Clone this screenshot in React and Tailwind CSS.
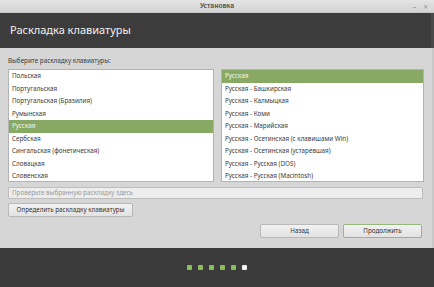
import React from "react";

const layouts = [
  "Польская",
  "Португальская",
  "Португальская (Бразилия)",
  "Румынская",
  "Русская",
  "Сербская",
  "Сингальская (фонетическая)",
  "Словацкая",
  "Словенская",
];

const variants = [
  "Русская",
  "Русская - Башкирская",
  "Русская - Калмыцкая",
  "Русская - Коми",
  "Русская - Марийская",
  "Русская - Осетинская (с клавишами Win)",
  "Русская - Осетинская (устаревшая)",
  "Русская - Русская (DOS)",
  "Русская - Русская (Macintosh)",
];

const ListBox = ({ items, selected, className }) => (
  <div
    className={`h-[113px] overflow-hidden bg-white border border-[#b3b3b3] ${className}`}
  >
    {items.map((item) => (
      <div
        key={item}
        className={
          item === selected
            ? "h-[12.5px] leading-[12.5px] px-[3px] bg-[#87a964] text-[#f4f8ef]"
            : "h-[12.5px] leading-[12.5px] px-[3px] text-[#3a3a3a]"
        }
      >
        {item}
      </div>
    ))}
  </div>
);

export default function App() {
  return (
    <div className="w-[434px] h-[287px] flex flex-col overflow-hidden font-['Noto_Sans',sans-serif] text-[6.3px]">
      {/* заголовок окна */}
      <div className="relative h-[13px] shrink-0 flex items-center justify-center bg-gradient-to-b from-[#e4e4e4] to-[#d4d4d4] border-b border-[#c4c4c4]">
        <span className="font-bold text-[6.5px] text-[#5a5a5a]">Установка</span>
        <div className="absolute right-[6px] top-0 h-[13px] flex items-center gap-[7px] text-[#9a9a9a] text-[8px]">
          <span>–</span>
          <span>×</span>
        </div>
      </div>

      <div className="h-[35px] shrink-0 flex items-center px-[10px] bg-[#3c3c3c] border-r-[3px] border-[#4a4a4a]">
        <h1 className="text-[11px] text-[#f2f2f2]">Раскладка клавиатуры</h1>
      </div>

      <div className="flex-1 flex flex-col bg-[#d6d6d6] pl-[8px] pr-[8px] pt-[8px] border-r-[2px] border-[#c8c8c8]">
        <div className="h-[10px] leading-[10px] mb-[3px] text-[#3a3a3a]">
          Выберите раскладку клавиатуры:
        </div>
        <div className="flex gap-[7px]">
          <ListBox items={layouts} selected="Русская" className="w-[206px]" />
          <ListBox items={variants} selected="Русская" className="flex-1" />
        </div>
        <div className="mt-[5px] h-[12px] mr-[1px] flex items-center px-[3px] bg-[#ededed] border border-[#bdbdbd] rounded-[1px] text-[#9a9a9a]">
          Проверьте выбранную раскладку здесь
        </div>
        <div className="mt-[4px]">
          <button className="h-[14px] w-[125px] flex items-center justify-center bg-gradient-to-b from-[#f2f2f2] to-[#e2e2e2] border border-[#b8b8b8] rounded-[2px] text-[#333]">
            Определить раскладку клавиатуры
          </button>
        </div>
        <div className="mt-[7px] pr-[2px] flex justify-end gap-[4px]">
          <button className="h-[14px] w-[79px] flex items-center justify-center bg-gradient-to-b from-[#f2f2f2] to-[#e2e2e2] border border-[#b8b8b8] rounded-[2px] text-[#333]">
            Назад
          </button>
          <button className="h-[14px] w-[79px] flex items-center justify-center bg-gradient-to-b from-[#f2f2f2] to-[#e2e2e2] border border-[#95b97a] rounded-[2px] text-[#333]">
            Продолжить
          </button>
        </div>
      </div>

      <div className="h-[39px] shrink-0 flex items-center justify-center gap-[6px] bg-[#3b3b3b]">
        {[0, 1, 2, 3, 4].map((i) => (
          <div key={i} className="w-[5px] h-[5px] bg-[#8cbf5c] rounded-[1px]" />
        ))}
        <div className="w-[5px] h-[5px] bg-[#f2f2f2] rounded-[1px]" />
      </div>
    </div>
  );
}
